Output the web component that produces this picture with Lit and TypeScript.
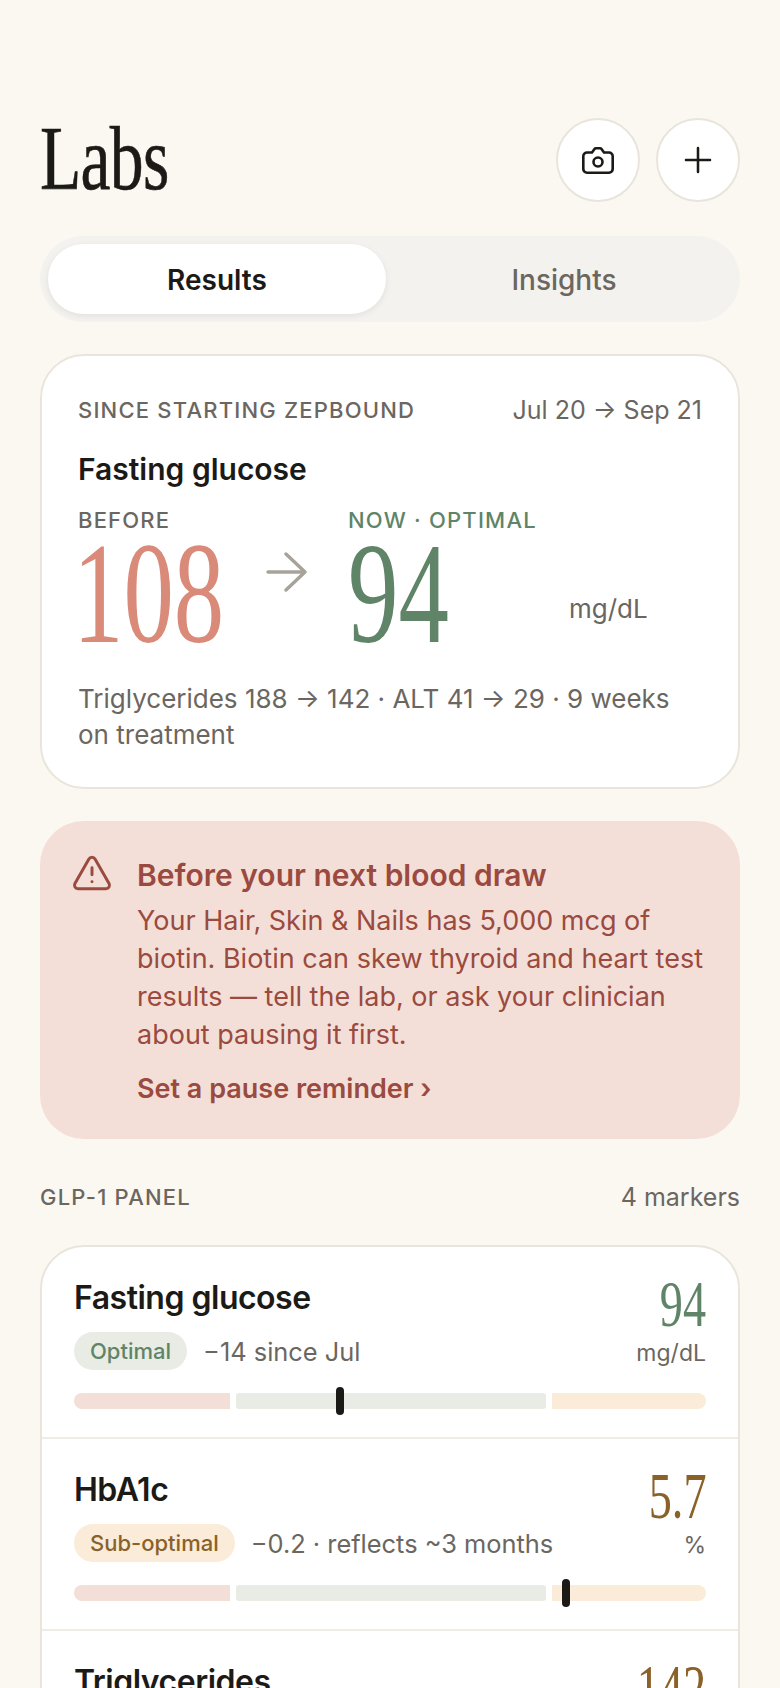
import { LitElement, html, css } from 'lit';
import { customElement } from 'lit/decorators.js';

type Marker = {
  name: string;
  value: string;
  unit: string;
  status: string;
  tone: 'good' | 'warn';
  note: string;
  pos: number;
};

const markers: Marker[] = [
  { name: 'Fasting glucose', value: '94', unit: 'mg/dL', status: 'Optimal', tone: 'good', note: '−14 since Jul', pos: 266 },
  { name: 'HbA1c', value: '5.7', unit: '%', status: 'Sub-optimal', tone: 'warn', note: '−0.2 · reflects ~3 months', pos: 492 },
  { name: 'Triglycerides', value: '142', unit: 'mg/dL', status: 'Sub-optimal', tone: 'warn', note: '−46 since Jul', pos: 500 },
];

@customElement('app-root')
export class AppRoot extends LitElement {
  static styles = css`
    :host {
      display: block;
      height: 1688px;
      overflow: hidden;
      background: #fbf8f2;
      color: #1c1a17;
      font-family: Inter, 'Liberation Sans', sans-serif;
    }

    .page {
      padding: 118px 40px 0;
      display: flex;
      flex-direction: column;
    }

    .serif {
      font-family: 'Liberation Serif', serif;
      font-weight: 400;
      display: inline-block;
      transform-origin: left center;
      white-space: nowrap;
    }

    .head {
      display: flex;
      justify-content: space-between;
      align-items: center;
      height: 84px;
    }

    .title {
      font-size: 92px;
      line-height: 84px;
      transform: scaleX(0.735);
      letter-spacing: -1px;
      margin-top: -5px;
      -webkit-text-stroke: 0.6px #1c1a17;
    }

    .head-btns {
      display: flex;
      gap: 16px;
    }

    .round {
      width: 84px;
      height: 84px;
      box-sizing: border-box;
      border-radius: 50%;
      background: #fff;
      border: 2px solid #e9e5dc;
      display: flex;
      align-items: center;
      justify-content: center;
    }

    .round svg {
      display: block;
      fill: none;
      stroke: #1c1a17;
      stroke-linecap: round;
      stroke-linejoin: round;
    }

    .tabs {
      margin-top: 34px;
      height: 86px;
      box-sizing: border-box;
      padding: 8px;
      border-radius: 43px;
      background: #f3f2ee;
      display: flex;
    }

    .tab {
      flex: 1;
      display: flex;
      align-items: center;
      justify-content: center;
      box-sizing: border-box;
      padding: 2px 0 0 10px;
      border-radius: 35px;
      font-size: 28px;
      font-weight: 500;
      color: #6b6660;
    }

    .tab.on {
      flex: 0 0 338px;
      padding-left: 0;
      background: #fff;
      color: #1c1a17;
      font-weight: 600;
      box-shadow: 0 2px 6px rgba(40, 30, 20, 0.08);
    }

    .card {
      background: #fff;
      border: 2px solid #e9e5dc;
      border-radius: 44px;
      box-sizing: border-box;
    }

    .hero {
      margin-top: 32px;
      height: 435px;
      padding: 38px 36px 0;
    }

    .hero-top {
      display: flex;
      justify-content: space-between;
      align-items: center;
      height: 32px;
    }

    .eyebrow {
      font-size: 22px;
      font-weight: 500;
      letter-spacing: 1.2px;
      color: #6b6660;
    }

    .range {
      font-size: 25px;
      color: #6b6660;
    }

    .hero-name {
      margin-top: 24px;
      font-size: 30px;
      line-height: 38px;
      font-weight: 600;
    }

    .compare {
      margin-top: 18px;
      display: flex;
      align-items: flex-start;
    }

    .col-before { width: 188px; }
    .col-now { width: 221px; }
    .col-arrow {
      width: 82px;
      padding-top: 46px;
      box-sizing: border-box;
    }

    .col-arrow svg {
      display: block;
      fill: none;
      stroke: #a8a39a;
      stroke-width: 3.4;
      stroke-linecap: round;
      stroke-linejoin: round;
    }

    .col-label {
      font-size: 22px;
      line-height: 28px;
      font-weight: 500;
      letter-spacing: 1.2px;
      color: #6b6660;
      white-space: nowrap;
    }

    .col-now .col-label { color: #5f8468; }

    .big {
      font-size: 144px;
      line-height: 116px;
      transform: scaleX(0.7);
      margin-top: 2px;
    }

    .big.before { color: #d98a78; margin-left: -5px; }
    .big.now { color: #5f8468; }

    .hero-unit {
      font-size: 26px;
      color: #6b6660;
      padding-top: 87px;
    }

    .hero-foot {
      margin-top: 29px;
      font-size: 26px;
      line-height: 36px;
      color: #6b6660;
    }

    .alert {
      margin-top: 32px;
      height: 318px;
      box-sizing: border-box;
      background: #f4dfd8;
      border-radius: 44px;
      padding: 35px 36px 0 31px;
      display: flex;
      gap: 24px;
      color: #9a4a3e;
    }

    .alert svg {
      flex: none;
      margin-top: -4px;
      fill: none;
      stroke: currentColor;
      stroke-width: 1.7;
      stroke-linecap: round;
      stroke-linejoin: round;
    }

    .alert-title {
      font-size: 30px;
      line-height: 38px;
      font-weight: 600;
    }

    .alert-body {
      margin-top: 8px;
      font-size: 27px;
      line-height: 38px;
    }

    .alert-link {
      margin-top: 17px;
      font-size: 27px;
      line-height: 36px;
      font-weight: 600;
    }

    .section {
      margin-top: 42px;
      display: flex;
      justify-content: space-between;
      align-items: center;
      height: 32px;
    }

    .section .count {
      font-size: 25px;
      color: #6b6660;
    }

    .panel {
      margin-top: 32px;
    }

    .row {
      height: 192px;
      box-sizing: border-box;
      padding: 32px 32px 0;
      border-top: 2px solid #f0ede6;
    }

    .row:first-child {
      border-top: 0;
      height: 190px;
    }

    .row-main {
      display: flex;
      justify-content: space-between;
      height: 102px;
    }

    .row-name {
      font-size: 32px;
      line-height: 38px;
      font-weight: 600;
      letter-spacing: -0.5px;
    }

    .row-meta {
      margin-top: 15px;
      display: flex;
      align-items: center;
      gap: 16px;
      font-size: 25.4px;
      color: #6b6660;
    }

    .pill {
      height: 38px;
      padding: 0 16px;
      border-radius: 19px;
      font-size: 22px;
      font-weight: 500;
      display: flex;
      align-items: center;
    }

    .pill.good { background: #e8ece5; color: #5f8468; }
    .pill.warn { background: #faecd8; color: #8a6128; }

    .row-value {
      display: flex;
      flex-direction: column;
      align-items: flex-end;
    }

    .val {
      font-size: 66px;
      line-height: 56px;
      transform: scaleX(0.7);
      transform-origin: right center;
      margin-top: -3px;
    }

    .val.good { color: #5f8468; }
    .val.warn { color: #8a6128; }

    .unit {
      margin-top: 6px;
      font-size: 23px;
      line-height: 30px;
      color: #6b6660;
    }

    .track {
      position: relative;
      margin-top: 12px;
      display: flex;
      gap: 6px;
      height: 16px;
    }

    .seg { height: 16px; }
    .seg.a { width: 156px; background: #f4dfd8; border-radius: 8px 0 0 8px; }
    .seg.b { flex: 1; background: #e8ece5; border-radius: 3px; }
    .seg.c { width: 154px; background: #faecd8; border-radius: 0 8px 8px 0; }

    .mark {
      position: absolute;
      top: -6px;
      width: 8px;
      height: 28px;
      margin-left: -4px;
      border-radius: 4px;
      background: #1c1a17;
    }
  `;

  private renderRow(m: Marker) {
    return html`
      <div class="row">
        <div class="row-main">
          <div>
            <div class="row-name">${m.name}</div>
            <div class="row-meta">
              <span class="pill ${m.tone}">${m.status}</span>
              <span>${m.note}</span>
            </div>
          </div>
          <div class="row-value">
            <span class="serif val ${m.tone}">${m.value}</span>
            <span class="unit">${m.unit}</span>
          </div>
        </div>
        <div class="track">
          <div class="seg a"></div>
          <div class="seg b"></div>
          <div class="seg c"></div>
          <div class="mark" style="left:${m.pos}px"></div>
        </div>
      </div>
    `;
  }

  render() {
    return html`
      <div class="page">
        <div class="head">
          <span class="serif title">Labs</span>
          <div class="head-btns">
            <div class="round">
              <svg width="32" height="27" viewBox="0 0 32 27" stroke-width="2.6">
                <path d="M10 5.5 12.5 2Q13 1.3 14 1.3H18Q19 1.3 19.5 2L22 5.5H27A3.7 3.7 0 0 1 30.7 9.2V22A3.7 3.7 0 0 1 27 25.7H5A3.7 3.7 0 0 1 1.3 22V9.2A3.7 3.7 0 0 1 5 5.5Z"></path>
                <circle cx="16" cy="15" r="4.5"></circle>
              </svg>
            </div>
            <div class="round">
              <svg width="34" height="34" viewBox="0 0 24 24" stroke-width="1.8">
                <path d="M12 3.5v17M3.5 12h17"></path>
              </svg>
            </div>
          </div>
        </div>

        <div class="tabs">
          <div class="tab on">Results</div>
          <div class="tab">Insights</div>
        </div>

        <div class="card hero">
          <div class="hero-top">
            <span class="eyebrow">SINCE STARTING ZEPBOUND</span>
            <span class="range">Jul 20 → Sep 21</span>
          </div>
          <div class="hero-name">Fasting glucose</div>
          <div class="compare">
            <div class="col-before">
              <div class="col-label">BEFORE</div>
              <span class="serif big before">108</span>
            </div>
            <div class="col-arrow">
              <svg width="42" height="40" viewBox="0 0 42 40">
                <path d="M2 20h37M20 2l19 18-19 18"></path>
              </svg>
            </div>
            <div class="col-now">
              <div class="col-label">NOW · OPTIMAL</div>
              <span class="serif big now">94</span>
            </div>
            <div class="hero-unit">mg/dL</div>
          </div>
          <div class="hero-foot">Triglycerides 188 → 142 · ALT 41 → 29 · 9 weeks on treatment</div>
        </div>

        <div class="alert">
          <svg width="42" height="42" viewBox="0 0 24 24">
            <path d="m21.73 18-8-14a2 2 0 0 0-3.48 0l-8 14A2 2 0 0 0 4 21h16a2 2 0 0 0 1.73-3"></path>
            <path d="M12 9v4M12 17h.01"></path>
          </svg>
          <div>
            <div class="alert-title">Before your next blood draw</div>
            <div class="alert-body">Your Hair, Skin &amp; Nails has 5,000 mcg of biotin. Biotin can skew thyroid and heart test results — tell the lab, or ask your clinician about pausing it first.</div>
            <div class="alert-link">Set a pause reminder ›</div>
          </div>
        </div>

        <div class="section">
          <span class="eyebrow">GLP-1 PANEL</span>
          <span class="count">4 markers</span>
        </div>

        <div class="card panel">
          ${markers.map((m) => this.renderRow(m))}
        </div>
      </div>
    `;
  }
}
